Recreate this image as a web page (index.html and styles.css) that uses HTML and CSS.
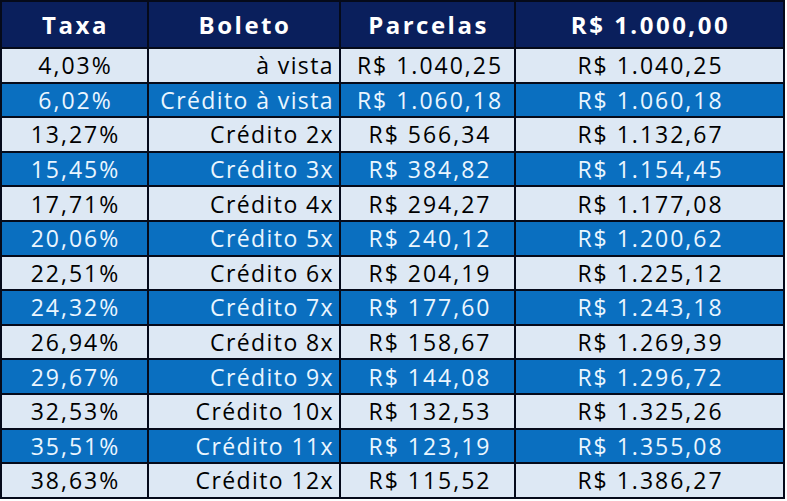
FILE: index.html
```html
<!DOCTYPE html>
<html lang="pt-BR">
<head>
<meta charset="utf-8">
<title>Taxas</title>
<link rel="stylesheet" href="styles.css">
</head>
<body>
<div class="grid">
  <div class="h">Taxa</div><div class="h">Boleto</div><div class="h">Parcelas</div><div class="h">R$ 1.000,00</div>

  <div class="c l">4,03%</div><div class="c l r">à vista</div><div class="c l p">R$ 1.040,25</div><div class="c l">R$ 1.040,25</div>
  <div class="c b">6,02%</div><div class="c b r">Crédito à vista</div><div class="c b p">R$ 1.060,18</div><div class="c b">R$ 1.060,18</div>
  <div class="c l">13,27%</div><div class="c l r">Crédito 2x</div><div class="c l p">R$ 566,34</div><div class="c l">R$ 1.132,67</div>
  <div class="c b">15,45%</div><div class="c b r">Crédito 3x</div><div class="c b p">R$ 384,82</div><div class="c b">R$ 1.154,45</div>
  <div class="c l">17,71%</div><div class="c l r">Crédito 4x</div><div class="c l p">R$ 294,27</div><div class="c l">R$ 1.177,08</div>
  <div class="c b">20,06%</div><div class="c b r">Crédito 5x</div><div class="c b p">R$ 240,12</div><div class="c b">R$ 1.200,62</div>
  <div class="c l">22,51%</div><div class="c l r">Crédito 6x</div><div class="c l p">R$ 204,19</div><div class="c l">R$ 1.225,12</div>
  <div class="c b">24,32%</div><div class="c b r">Crédito 7x</div><div class="c b p">R$ 177,60</div><div class="c b">R$ 1.243,18</div>
  <div class="c l">26,94%</div><div class="c l r">Crédito 8x</div><div class="c l p">R$ 158,67</div><div class="c l">R$ 1.269,39</div>
  <div class="c b">29,67%</div><div class="c b r">Crédito 9x</div><div class="c b p">R$ 144,08</div><div class="c b">R$ 1.296,72</div>
  <div class="c l">32,53%</div><div class="c l r">Crédito 10x</div><div class="c l p">R$ 132,53</div><div class="c l">R$ 1.325,26</div>
  <div class="c b">35,51%</div><div class="c b r">Crédito 11x</div><div class="c b p">R$ 123,19</div><div class="c b">R$ 1.355,08</div>
  <div class="c l">38,63%</div><div class="c l r">Crédito 12x</div><div class="c l p">R$ 115,52</div><div class="c l">R$ 1.386,27</div>
</div>
</body>
</html>
```
FILE: styles.css
```css
html, body {
  margin: 0;
  padding: 0;
  background: #ffffff;
}
.grid {
  display: grid;
  width: 785px;
  box-sizing: border-box;
  grid-template-columns: 145px 190px 173px 267px;
  grid-template-rows: 45px repeat(13, 32.6px);
  gap: 2px;
  padding: 2px;
  background: #050a1a;
  font-family: "Open Sans", sans-serif;
  font-size: 23px;
}
.h {
  background: #0a1f5c;
  color: #ffffff;
  font-weight: bold;
  font-size: 24px;
  letter-spacing: 2.5px;
  display: flex;
  align-items: center;
  justify-content: center;
  padding-left: 2px;
}
.c {
  display: flex;
  align-items: center;
  justify-content: center;
  letter-spacing: 2px;
  padding-left: 2px;
}
.c.r {
  justify-content: flex-end;
  padding-right: 5px;
  letter-spacing: 1.4px;
}
.c.p {
  padding-left: 5px;
}
.l {
  background: #dde8f4;
  color: #000000;
}
.b {
  background: #0a6fc0;
  color: #eaf6ff;
}
```
